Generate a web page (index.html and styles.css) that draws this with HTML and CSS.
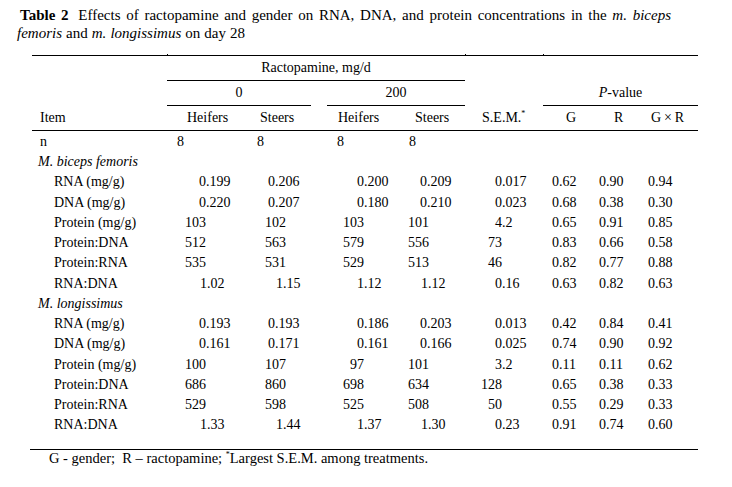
FILE: index.html
```html
<!DOCTYPE html>
<html lang="en">
<head>
<meta charset="utf-8">
<title>Table 2</title>
<link rel="stylesheet" href="styles.css">
</head>
<body>
<div class="page">
  <p class="title"><b class="label">Table 2</b><span> Effects of ractopamine and gender on RNA, DNA, and protein concentrations in the </span><i>m. biceps</i> <i>femoris</i><span> and </span><i>m. longissimus</i><span> on day 28</span></p>

  <table class="data">
    <colgroup>
      <col class="c-item"><col class="c-h0"><col class="c-s0"><col class="c-gap"><col class="c-h2"><col class="c-s2"><col class="c-sem"><col class="c-g"><col class="c-r"><col class="c-gr">
    </colgroup>
    <thead>
      <tr class="r1">
        <th></th><th colspan="5" class="grp rule tick">Ractopamine, mg/d</th><th class="tick"></th><th colspan="3" class="tick"></th>
      </tr>
      <tr class="r2">
        <th></th><th colspan="2" class="grp rule">0</th><th></th><th colspan="2" class="grp rule">200</th><th></th><th colspan="3" class="grp rule"><i>P</i>-value</th>
      </tr>
      <tr class="r3">
        <th class="o8">Item</th><th class="o20">Heifers</th><th class="o13">Steers</th><th></th><th class="o11">Heifers</th><th class="o15">Steers</th><th class="o17">S.E.M.<sup>*</sup></th><th class="o23">G</th><th class="o24">R</th><th class="o15">G&thinsp;×&thinsp;R</th>
      </tr>
    </thead>
    <tbody>
      <tr class="nrow">
        <td class="o8">n</td><td class="o10">8</td><td class="o10">8</td><td></td><td class="o10">8</td><td class="o9">8</td><td></td><td></td><td></td><td></td>
      </tr>
      <tr class="sec"><td colspan="10"><i>M. biceps femoris</i></td></tr>
      <tr><td class="lbl">RNA (mg/g)</td><td class="o32">0.199</td><td class="o21">0.206</td><td></td><td class="o30">0.200</td><td class="o20">0.209</td><td class="o30">0.017</td><td class="pv">0.62</td><td class="pv">0.90</td><td class="pv2">0.94</td></tr>
      <tr><td class="lbl">DNA (mg/g)</td><td class="o32">0.220</td><td class="o21">0.207</td><td></td><td class="o30">0.180</td><td class="o20">0.210</td><td class="o30">0.023</td><td class="pv">0.68</td><td class="pv">0.38</td><td class="pv2">0.30</td></tr>
      <tr><td class="lbl">Protein (mg/g)</td><td class="o18">103</td><td class="o18">102</td><td></td><td class="o16">103</td><td class="o8">101</td><td class="o30">4.2</td><td class="pv">0.65</td><td class="pv">0.91</td><td class="pv2">0.85</td></tr>
      <tr><td class="lbl">Protein:DNA</td><td class="o18">512</td><td class="o18">563</td><td></td><td class="o16">579</td><td class="o8">556</td><td class="o23">73</td><td class="pv">0.83</td><td class="pv">0.66</td><td class="pv2">0.58</td></tr>
      <tr><td class="lbl">Protein:RNA</td><td class="o18">535</td><td class="o18">531</td><td></td><td class="o16">529</td><td class="o8">513</td><td class="o23">46</td><td class="pv">0.82</td><td class="pv">0.77</td><td class="pv2">0.88</td></tr>
      <tr><td class="lbl">RNA:DNA</td><td class="o33">1.02</td><td class="o29">1.15</td><td></td><td class="o30">1.12</td><td class="o21">1.12</td><td class="o30">0.16</td><td class="pv">0.63</td><td class="pv">0.82</td><td class="pv2">0.63</td></tr>
      <tr class="sec"><td colspan="10"><i>M. longissimus</i></td></tr>
      <tr><td class="lbl">RNA (mg/g)</td><td class="o32">0.193</td><td class="o21">0.193</td><td></td><td class="o30">0.186</td><td class="o20">0.203</td><td class="o30">0.013</td><td class="pv">0.42</td><td class="pv">0.84</td><td class="pv2">0.41</td></tr>
      <tr><td class="lbl">DNA (mg/g)</td><td class="o32">0.161</td><td class="o21">0.171</td><td></td><td class="o30">0.161</td><td class="o20">0.166</td><td class="o30">0.025</td><td class="pv">0.74</td><td class="pv">0.90</td><td class="pv2">0.92</td></tr>
      <tr><td class="lbl">Protein (mg/g)</td><td class="o18">100</td><td class="o18">107</td><td></td><td class="o23">97</td><td class="o8">101</td><td class="o30">3.2</td><td class="pv">0.11</td><td class="pv">0.11</td><td class="pv2">0.62</td></tr>
      <tr><td class="lbl">Protein:DNA</td><td class="o18">686</td><td class="o18">860</td><td></td><td class="o16">698</td><td class="o8">634</td><td class="o16">128</td><td class="pv">0.65</td><td class="pv">0.38</td><td class="pv2">0.33</td></tr>
      <tr><td class="lbl">Protein:RNA</td><td class="o18">529</td><td class="o18">598</td><td></td><td class="o16">525</td><td class="o8">508</td><td class="o23">50</td><td class="pv">0.55</td><td class="pv">0.29</td><td class="pv2">0.33</td></tr>
      <tr><td class="lbl">RNA:DNA</td><td class="o33">1.33</td><td class="o29">1.44</td><td></td><td class="o30">1.37</td><td class="o21">1.30</td><td class="o30">0.23</td><td class="pv">0.91</td><td class="pv">0.74</td><td class="pv2">0.60</td></tr>
    </tbody>
  </table>

  <p class="note">G - gender;&nbsp; R – ractopamine; <sup>*</sup>Largest S.E.M. among treatments.</p>
</div>
</body>
</html>
```

FILE: styles.css
```css
html, body {
  margin: 0;
  background: #ffffff;
  color: #000000;
  font-family: "Liberation Serif", "Times New Roman", serif;
  font-size: 14px;
}

.page {
  padding: 6px 0 0 16px;
}

.title {
  margin: 0 0 0 1px;
  width: 654px;
  font-size: 15px;
  line-height: 18px;
  text-align: justify;
  text-indent: 3px;
  word-spacing: 0.3px;
}

.title .label {
  margin-right: 4px;
}

.data {
  margin: 13px 0 0 16px;
  width: 666px;
  table-layout: fixed;
  border-collapse: separate;
  border-spacing: 0;
}

.c-item { width: 135px; }
.c-h0 { width: 80px; }
.c-s0 { width: 64px; }
.c-gap { width: 16px; }
.c-h2 { width: 73px; }
.c-s2 { width: 65px; }
.c-sem { width: 78px; }
.c-g { width: 47px; }
.c-r { width: 46px; }
.c-gr { width: 62px; }

.data th,
.data td {
  padding: 0;
  font-weight: normal;
  text-align: left;
  white-space: nowrap;
  vertical-align: middle;
  line-height: 16px;
}

.data sup,
.note sup {
  font-size: 8px;
  line-height: 0;
  vertical-align: 6px;
}

.data .grp {
  text-align: center;
}

.r1 th {
  border-top: 1px solid #000;
}

/* small column-border stubs poking above the top rule */
.r1 .tick {
  position: relative;
}

.r1 .tick::before {
  content: "";
  position: absolute;
  left: 0;
  top: -2px;
  width: 1px;
  height: 1px;
  background: #000;
}

.r1 { height: 26px; }
.r2 { height: 25px; }
.r3 { height: 25px; }

.rule {
  border-bottom: 1px solid #000;
}

.r3 th {
  border-bottom: 1px solid #000;
}

.data tbody tr { height: 20.25px; }
.data tbody tr.nrow { height: 21px; }

.sec td {
  padding-left: 6px;
}

.data .lbl {
  padding-left: 22px;
}

.data .pv { padding-left: 9px; }
.data .pv2 { padding-left: 12px; }

.data .o8 { padding-left: 8px; }
.data .o9 { padding-left: 9px; }
.data .o10 { padding-left: 10px; }
.data .o11 { padding-left: 11px; }
.data .o13 { padding-left: 13px; }
.data .o15 { padding-left: 15px; }
.data .o16 { padding-left: 16px; }
.data .o17 { padding-left: 17px; }
.data .o18 { padding-left: 18px; }
.data .o20 { padding-left: 20px; }
.data .o21 { padding-left: 21px; }
.data .o23 { padding-left: 23px; }
.data .o24 { padding-left: 24px; }
.data .o29 { padding-left: 29px; }
.data .o30 { padding-left: 30px; }
.data .o32 { padding-left: 32px; }
.data .o33 { padding-left: 33px; }

.note {
  margin: 13px 0 0 14px;
  width: 649px;
  padding-left: 19px;
  border-top: 1px solid #000;
  font-size: 14.5px;
  line-height: 16px;
}
```
